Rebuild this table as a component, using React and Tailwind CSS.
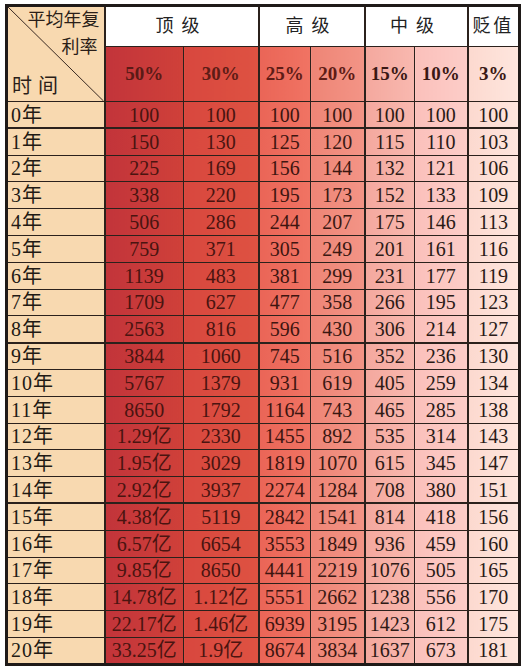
import React from 'react';

const cols = [
  { rate: '50%', bg: 'bg-linear-to-r from-[#c2343a] to-[#cf4039]', text: 'text-[#4a1410]' },
  { rate: '30%', bg: 'bg-linear-to-r from-[#d8473e] to-[#de5242]', text: 'text-[#4a1410]' },
  { rate: '25%', bg: 'bg-linear-to-r from-[#ea6557] to-[#f07363]', text: 'text-[#3e1510]' },
  { rate: '20%', bg: 'bg-linear-to-r from-[#ee8576] to-[#f39486]', text: 'text-[#3a1812]' },
  { rate: '15%', bg: 'bg-linear-to-r from-[#f4a89e] to-[#f8b8af]', text: 'text-[#2e1a16]' },
  { rate: '10%', bg: 'bg-linear-to-r from-[#fbc0bb] to-[#fccdc8]', text: 'text-[#2a1a16]' },
  { rate: '3%', bg: 'bg-linear-to-r from-[#fcd9cf] to-[#fee6de]', text: 'text-[#2a1a16]' },
];

const rows = [
  ['0年', 100, 100, 100, 100, 100, 100, 100],
  ['1年', 150, 130, 125, 120, 115, 110, 103],
  ['2年', 225, 169, 156, 144, 132, 121, 106],
  ['3年', 338, 220, 195, 173, 152, 133, 109],
  ['4年', 506, 286, 244, 207, 175, 146, 113],
  ['5年', 759, 371, 305, 249, 201, 161, 116],
  ['6年', 1139, 483, 381, 299, 231, 177, 119],
  ['7年', 1709, 627, 477, 358, 266, 195, 123],
  ['8年', 2563, 816, 596, 430, 306, 214, 127],
  ['9年', 3844, 1060, 745, 516, 352, 236, 130],
  ['10年', 5767, 1379, 931, 619, 405, 259, 134],
  ['11年', 8650, 1792, 1164, 743, 465, 285, 138],
  ['12年', '1.29亿', 2330, 1455, 892, 535, 314, 143],
  ['13年', '1.95亿', 3029, 1819, 1070, 615, 345, 147],
  ['14年', '2.92亿', 3937, 2274, 1284, 708, 380, 151],
  ['15年', '4.38亿', 5119, 2842, 1541, 814, 418, 156],
  ['16年', '6.57亿', 6654, 3553, 1849, 936, 459, 160],
  ['17年', '9.85亿', 8650, 4441, 2219, 1076, 505, 165],
  ['18年', '14.78亿', '1.12亿', 5551, 2662, 1238, 556, 170],
  ['19年', '22.17亿', '1.46亿', 6939, 3195, 1423, 612, 175],
  ['20年', '33.25亿', '1.9亿', 8674, 3834, 1637, 673, 181],
];

// thick line under these rows
const thickAfter = [0, 8, 14];
// thick line left of these columns (index into cols)
const groupStart = [0, 2, 4, 6];

const App = () => {
  return (
    <div className="bg-white w-[522px] h-[666px] pt-[4px] pl-[5px] font-['Liberation_Serif','Noto_Sans_CJK_SC',serif]">
      <table className="table-fixed border-collapse border-[3px] border-[#1f1a18] w-[516px]">
        <colgroup>
          <col className="w-[98px]" />
          <col className="w-[79px]" />
          <col className="w-[75px]" />
          <col className="w-[52px]" />
          <col className="w-[54px]" />
          <col className="w-[50px]" />
          <col className="w-[53px]" />
          <col className="w-[52px]" />
        </colgroup>
        <thead>
          <tr className="h-[40px]">
            <th rowSpan={2} className="relative bg-[#f8d9b0] border-r-2 border-b border-[#2b211c] p-0 font-normal text-[#2a1e18] text-[18px] leading-none">
              <svg className="absolute inset-0 w-full h-full" preserveAspectRatio="none" viewBox="0 0 100 100">
                <line x1="0" y1="0" x2="100" y2="100" stroke="#3a2a22" strokeWidth="1" vectorEffect="non-scaling-stroke" />
              </svg>
              <div className="relative flex flex-col h-[94px] pt-[4px] pb-[5px] px-[4px]">
                <div className="self-end">平均年复</div>
                <div className="self-end pr-[2px] mt-[9px]">利率</div>
                <div className="self-start mt-auto text-[20px] tracking-[0.3em]">时间</div>
              </div>
            </th>
            <th colSpan={2} className="bg-white border-r-2 border-[#2b211c] font-normal text-[18px] tracking-[0.45em] text-[#222]">顶级</th>
            <th colSpan={2} className="bg-white border-r-2 border-[#2b211c] font-normal text-[18px] tracking-[0.45em] text-[#222]">高级</th>
            <th colSpan={2} className="bg-white border-r-2 border-[#2b211c] font-normal text-[18px] tracking-[0.45em] text-[#222]">中级</th>
            <th className="bg-white font-normal text-[18px] tracking-[0.15em] text-[#222]">贬值</th>
          </tr>
          <tr className="h-[54px]">
            {cols.map((c, i) => (
              <th
                key={c.rate}
                className={`${c.bg} border-t border-b border-[#2b211c] text-[19px] font-bold ${i === 0 ? 'text-[#5a1a16]' : i < 4 ? 'text-[#5e1c16]' : 'text-[#3a1814]'} ${groupStart.includes(i + 1) ? 'border-r-2' : i < 6 ? 'border-r' : ''}`}
              >
                {c.rate}
              </th>
            ))}
          </tr>
        </thead>
        <tbody>
          {rows.map((r, ri) => (
            <tr key={r[0]} className="h-[26.8px]">
              <td className={`bg-[#f8d9b0] border-r-2 ${thickAfter.includes(ri) ? 'border-b-2' : 'border-b'} border-[#2b211c] pl-[3px] text-[20px] leading-none text-[#221a14] tracking-[1px] whitespace-nowrap`}>
                {r[0]}
              </td>
              {cols.map((c, i) => (
                <td
                  key={i}
                  className={`${c.bg} ${c.text} ${thickAfter.includes(ri) ? 'border-b-2' : 'border-b'} border-[#2b211c] ${groupStart.includes(i + 1) ? 'border-r-2' : i < 6 ? 'border-r' : ''} text-center text-[20px] leading-none whitespace-nowrap p-0`}
                >
                  {r[i + 1]}
                </td>
              ))}
            </tr>
          ))}
        </tbody>
      </table>
    </div>
  );
};

export default App;
